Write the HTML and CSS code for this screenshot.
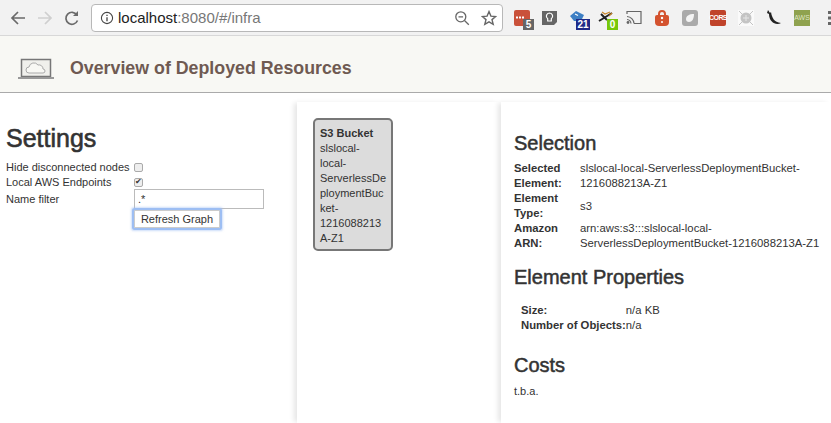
FILE: index.html
```html
<!DOCTYPE html>
<html lang="en">
<head>
    <meta charset="UTF-8">
    <title>Overview of Deployed Resources</title>
    <meta name="viewport" content="width=device-width, initial-scale=1.0">
    <link rel="stylesheet" href="styles.css">
</head>
<body>
    <div class="toolbar">
        <svg class="nav" width="20" height="20" viewBox="0 0 20 20"><path d="M17 10H4M10 4l-6 6 6 6" fill="none" stroke="#6a6a6a" stroke-width="1.7"/></svg>
        <svg class="nav" width="20" height="20" viewBox="0 0 20 20"><path d="M3 10h13M10 4l6 6-6 6" fill="none" stroke="#cfcfcf" stroke-width="1.7"/></svg>
        <svg class="nav" width="20" height="20" viewBox="0 0 20 20"><path d="M15.5 12.5a6 6 0 1 1-.6-5.6" fill="none" stroke="#6a6a6a" stroke-width="1.7"/><path d="M16 3v5h-5z" fill="#6a6a6a"/></svg>
        <div class="omnibox">
            <svg width="14" height="14" viewBox="0 0 14 14"><circle cx="7" cy="7" r="5.6" fill="none" stroke="#444" stroke-width="1.1"/><path d="M7 6.2v4M7 3.8v1.3" stroke="#444" stroke-width="1.3"/></svg>
            <span class="url"><b>localhost</b>:8080/#/infra</span>
            <svg class="zoom-icon" width="16" height="16" viewBox="0 0 16 16"><circle cx="6.8" cy="6.8" r="5" fill="none" stroke="#666" stroke-width="1.3"/><path d="M4.5 6.8h4.6M10.5 10.5l4.3 4.3" stroke="#666" stroke-width="1.3"/></svg>
            <svg width="16" height="16" viewBox="0 0 16 16"><path d="M8 1.6l1.9 4.5 4.8.4-3.7 3.1 1.2 4.7L8 11.8l-4.2 2.5L5 9.6 1.3 6.5l4.8-.4z" fill="none" stroke="#666" stroke-width="1.4"/></svg>
        </div>
        <div class="extensions">
            <div class="ext">
                <svg width="16" height="16" viewBox="0 0 16 16"><rect width="16" height="16" rx="2" fill="#c9513a"/><path d="M2 7.500h2M5 7.500h2M8 7.500h2" stroke="#fff" stroke-width="2"/></svg>
                <span class="badge badge-grey">5</span>
            </div>
            <div class="ext">
                <svg width="16" height="16" viewBox="0 0 16 16"><path d="M0 1h15v11l-3 3H0z" fill="#666"/><path d="M7.500 3a3.200 3.200 0 0 0-1.800 5.800v2.200h3.600V8.800A3.200 3.200 0 0 0 7.500 3z" fill="none" stroke="#fff" stroke-width="1.200"/></svg>
            </div>
            <div class="ext">
                <svg width="16" height="16" viewBox="0 0 16 16"><path d="M0 6l6-5 8 4-3 6H4z" fill="#3d7fc4"/><path d="M5 4l3 1.500" stroke="#fff" stroke-width="1.200"/></svg>
                <span class="badge badge-navy">21</span>
            </div>
            <div class="ext">
                <svg width="16" height="16" viewBox="0 0 16 16"><path d="M1 11L14 3M3 4l6 6" fill="none" stroke="#222" stroke-width="2"/><path d="M4 2l3 2 5-2M11 6l3-3" fill="none" stroke="#c8862a" stroke-width="1.200"/></svg>
                <span class="badge badge-green">0</span>
            </div>
            <div class="ext">
                <svg width="16" height="16" viewBox="0 0 16 16"><path d="M1 4V1.500h14v12H8" fill="none" stroke="#666" stroke-width="1.200"/><path d="M1 6.500a7.500 7.500 0 0 1 7 7M1 9.500a4.500 4.500 0 0 1 4 4" fill="none" stroke="#666" stroke-width="1.200"/><circle cx="2" cy="12.500" r="1.400" fill="#666"/></svg>
            </div>
            <div class="ext">
                <svg width="16" height="16" viewBox="0 0 16 16"><path d="M5 6V4a3 3 0 0 1 6 0v2" fill="none" stroke="#d4532f" stroke-width="2"/><path d="M1 7a2 2 0 0 1 2-2h10a2 2 0 0 1 2 2v5a4 4 0 0 1-4 4H5a4 4 0 0 1-4-4z" fill="#d4532f"/><circle cx="8" cy="8" r="1.200" fill="#fff"/><circle cx="8" cy="12" r="1" fill="#fff"/></svg>
            </div>
            <div class="ext">
                <svg width="16" height="16" viewBox="0 0 16 16"><rect width="16" height="16" rx="3" fill="#aaa"/><path d="M4 9c0-3 3-5 8-5 0 5-2 8-5 8-2 0-3-1-3-3z" fill="#f4f4f4"/></svg>
            </div>
            <div class="ext cors">CORS</div>
            <div class="ext">
                <svg width="16" height="16" viewBox="0 0 16 16"><rect width="16" height="16" fill="#fafafa"/><circle cx="8" cy="8" r="5.500" fill="#c4c4c4"/><path d="M1 1l14 14M15 1L1 15" stroke="#c4c4c4" stroke-width="1"/><path d="M5 8h6M8 5v6" stroke="#e6e6e6" stroke-width="1"/></svg>
            </div>
            <div class="ext">
                <svg width="16" height="16" viewBox="0 0 16 16"><path d="M2 0l2 3 1-1c1 6 3 10 10 11-5 3-12-1-12-9L1 3z" fill="#222"/></svg>
            </div>
            <div class="ext aws">AWS</div>
            <svg class="menu" width="3" height="14" viewBox="0 0 3 14"><path d="M0 0h3v3H0zM0 5.500h3v3H0zM0 11h3v3H0z" fill="#666"/></svg>
        </div>
    </div>
    <header class="page-header">
        <svg width="36" height="24" viewBox="0 0 36 24"><rect x="3.500" y="2.500" width="29" height="17" fill="#f0f0ec" stroke="#777" stroke-width="1.500"/><path d="M11 16a3 3 0 0 1 0-6 5 5 0 0 1 9-2 4 4 0 0 1 5 4 2 2 0 0 1 0 4z" fill="#f8f8f4" stroke="#aaa"/><rect y="20" width="36" height="2" fill="#999"/></svg>
        <h1>Overview of Deployed Resources</h1>
    </header>
    <main class="columns">
        <section class="settings">
            <h2 class="settings-title">Settings</h2>
            <div class="settings-grid">
                <label>Hide disconnected nodes</label>
                <input type="checkbox">
                <label>Local AWS Endpoints</label>
                <input type="checkbox" checked>
                <label>Name filter</label>
                <input type="text" class="filter" value=".*">
                <span></span>
                <button class="refresh">Refresh Graph</button>
            </div>
        </section>
        <section class="graph">
            <div class="node">
                <b>S3 Bucket</b><br>
                slslocal-<br>local-<br>ServerlessDe<br>ploymentBuc<br>ket-<br>1216088213<br>A-Z1
            </div>
        </section>
        <section class="details">
            <h3>Selection</h3>
            <table class="selection">
                <tr><th>Selected Element:</th><td>slslocal-local-ServerlessDeploymentBucket-1216088213A-Z1</td></tr>
                <tr><th>Element Type:</th><td>s3</td></tr>
                <tr><th>Amazon ARN:</th><td>arn:aws:s3:::slslocal-local-ServerlessDeploymentBucket-1216088213A-Z1</td></tr>
            </table>
            <h3>Element Properties</h3>
            <table class="properties">
                <tr><th>Size:</th><td>n/a KB</td></tr>
                <tr><th>Number of Objects:</th><td>n/a</td></tr>
            </table>
            <h3>Costs</h3>
            <p class="costs">t.b.a.</p>
        </section>
    </main>
</body>
</html>
```

FILE: styles.css
```css
html, body {
    height: 100%;
}
body {
    margin: 0;
    height: 423px;
    overflow: hidden;
    display: flex;
    flex-direction: column;
    font-family: 'Liberation Sans', Arial, sans-serif;
    font-size: 11px;
    line-height: 15px;
    color: #333;
    background-color: #fff;
}

/* browser chrome */
.toolbar {
    height: 36px;
    box-sizing: border-box;
    display: flex;
    align-items: center;
    padding-left: 8px;
    background-color: #f2f2f2;
    border-bottom: 1px solid #d8d8d8;
    flex-shrink: 0;
}
.nav {
    margin-right: 7px;
}
.omnibox {
    width: 412px;
    height: 28px;
    margin-left: 2px;
    box-sizing: border-box;
    display: flex;
    align-items: center;
    gap: 4px;
    padding: 0 5px 0 8px;
    background-color: #fff;
    border: 1px solid #b8b8b8;
    border-radius: 4px;
    flex-shrink: 0;
}
.url {
    flex: 1;
    font-size: 15px;
    color: #777;
}
.url b {
    font-weight: normal;
    color: #222;
}
.zoom-icon {
    margin-right: 7px;
}
.extensions {
    display: flex;
    align-items: center;
    gap: 12px;
    margin-left: 11px;
}
.ext {
    position: relative;
    width: 16px;
    height: 16px;
    display: flex;
}
.badge {
    position: absolute;
    right: -4px;
    bottom: -4px;
    min-width: 11px;
    height: 11px;
    line-height: 11px;
    font-size: 10px;
    font-weight: bold;
    text-align: center;
    color: #fff;
}
.badge-grey {
    background-color: #666;
}
.badge-navy {
    min-width: 14px;
    background-color: #1f2a87;
}
.badge-green {
    background-color: #76c80a;
}
.cors {
    align-items: center;
    justify-content: center;
    font-size: 7px;
    font-weight: bold;
    letter-spacing: -0.6px;
    color: #fff;
    background-color: #c0432a;
    border-radius: 2px;
}
.aws {
    align-items: center;
    justify-content: center;
    font-size: 7px;
    color: #dfe6c4;
    background-color: #8fa24f;
}
.menu {
    margin-left: 6px;
    flex-shrink: 0;
}

/* page header */
.page-header {
    height: 57px;
    box-sizing: border-box;
    display: flex;
    align-items: center;
    gap: 16px;
    padding: 9px 0 0 18px;
    background-color: #f8f8f4;
    border-bottom: 1px solid #aaa;
    flex-shrink: 0;
}
.page-header h1 {
    margin: 0;
    font-size: 17.800px;
    font-weight: bold;
    color: #6f5a52;
}

.columns {
    flex: 1;
    display: flex;
    min-height: 0;
    margin-top: 9px;
}
.settings {
    width: 297px;
    box-sizing: border-box;
    padding: 22px 6px 0;
}
.settings-title {
    margin: 0 0 8px;
    font-size: 25px;
    line-height: 28px;
    font-weight: normal;
    -webkit-text-stroke: 0.6px #333;
}
.settings-grid {
    display: grid;
    grid-template-columns: 128px auto;
    grid-template-rows: 15px 14px 20px auto;
    justify-content: start;
    align-items: center;
}
.settings-grid label {
    white-space: nowrap;
}
.settings-grid input[type="checkbox"] {
    appearance: none;
    box-sizing: border-box;
    display: flex;
    align-items: center;
    justify-content: center;
    margin: 0;
    width: 9px;
    height: 9px;
    background-color: #eee;
    border: 1px solid #aaa;
    border-radius: 2px;
}
.settings-grid input[type="checkbox"]:checked::before {
    content: "\2714";
    font-size: 8px;
    line-height: 8px;
    color: #333;
}
.filter {
    box-sizing: border-box;
    width: 130px;
    height: 20px;
    padding: 1px 3px;
    border: 1px solid #bbb;
    font: 11px 'Liberation Sans', Arial, sans-serif;
    color: #333;
    outline: none;
}
.refresh {
    justify-self: start;
    box-sizing: border-box;
    height: 18px;
    width: 86px;
    margin-top: 1px;
    padding: 0;
    font: 11px 'Liberation Sans', Arial, sans-serif;
    color: #333;
    background-color: #fff;
    border: 1px solid #ccc;
    border-radius: 1px;
    box-shadow: 0 0 0 2px #9dbef3, 0 0 2px 3px rgba(157, 190, 243, 0.5);
}
.graph {
    width: 204px;
    box-sizing: border-box;
    padding: 16px;
    box-shadow: -4px 0 5px -1px rgba(0, 0, 0, 0.1);
}
.node {
    width: 80px;
    height: 133px;
    box-sizing: border-box;
    padding: 6px 5px 5px;
    background-color: #dcdcdc;
    border: 2px solid #777;
    border-radius: 5px;
}
.details {
    flex: 1;
    padding: 31px 10px 0 13px;
    box-shadow: -4px 0 5px -1px rgba(0, 0, 0, 0.1);
}
.details h3 {
    margin: 0;
    font-size: 20px;
    line-height: 20px;
    font-weight: normal;
    -webkit-text-stroke: 0.5px #333;
}
.details table {
    border-collapse: collapse;
    font-size: 11.300px;
}
.details th {
    padding: 0;
    text-align: left;
    font-weight: bold;
}
.details td {
    padding: 0;
}
.selection {
    margin: 8px 0 16px;
}
.selection th {
    width: 66px;
}
.properties {
    margin: 16px 0 22px 7px;
}
.costs {
    margin: 9px 0 0;
    font-size: 11px;
}
```
